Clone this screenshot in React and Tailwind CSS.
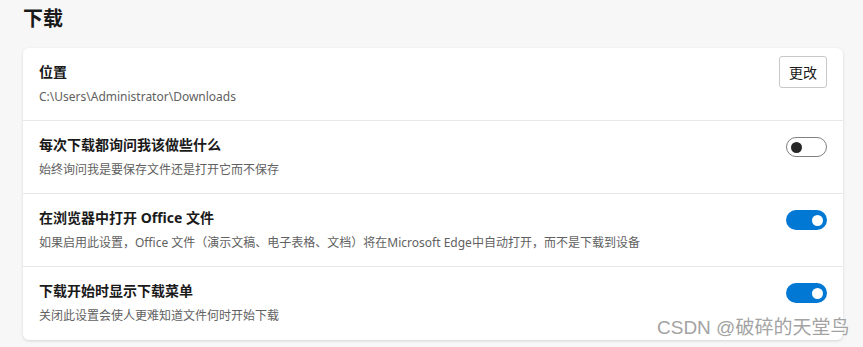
import { useState } from 'react'

const font = { fontFamily: '"Noto Sans", "Noto Sans CJK SC", sans-serif' }

const Toggle = ({ on, onChange }) => (
  <button
    onClick={onChange}
    className={`mt-[2px] w-[41px] h-[20px] rounded-full flex items-center px-[4px] shrink-0 ${
      on ? 'bg-[#0078d4] justify-end' : 'bg-white border border-[#808080] justify-start'
    }`}
  >
    <span className={`w-[11px] h-[11px] rounded-full ${on ? 'bg-white' : 'bg-[#262626]'}`} />
  </button>
)

const Row = ({ title, desc, children, last }) => (
  <div className={`h-[73px] px-4 pt-[14px] flex justify-between items-start ${last ? '' : 'border-b border-[#e8e8e8]'}`}>
    <div>
      <div className="text-[14px] leading-[20px] font-bold text-[#1a1a1a]">{title}</div>
      <div className="mt-[6px] text-[12px] leading-[18px] text-[#616161]">{desc}</div>
    </div>
    {children}
  </div>
)

export default function App() {
  const [ask, setAsk] = useState(false)
  const [office, setOffice] = useState(true)
  const [menu, setMenu] = useState(true)

  return (
    <div className="relative w-[863px] h-[347px] bg-[#f7f7f7] overflow-hidden" style={font}>
      <div className="pl-[23px] pr-[20px] pt-[5px]">
        <h1 className="text-[20px] leading-[28px] font-bold text-[#1a1a1a]">下载</h1>
        <div className="mt-[15px] bg-white rounded-[6px] shadow-[0_1px_3px_rgba(0,0,0,0.14)]">
          <Row title="位置" desc="C:\Users\Administrator\Downloads">
            <button className="-mt-[6px] w-[48px] h-[32px] border border-[#c8c8c8] rounded-[3px] text-[14px] text-[#1a1a1a] bg-white">
              更改
            </button>
          </Row>
          <Row title="每次下载都询问我该做些什么" desc="始终询问我是要保存文件还是打开它而不保存">
            <Toggle on={ask} onChange={() => setAsk(!ask)} />
          </Row>
          <Row
            title="在浏览器中打开 Office 文件"
            desc="如果启用此设置，Office 文件（演示文稿、电子表格、文档）将在Microsoft Edge中自动打开，而不是下载到设备"
          >
            <Toggle on={office} onChange={() => setOffice(!office)} />
          </Row>
          <Row title="下载开始时显示下载菜单" desc="关闭此设置会使人更难知道文件何时开始下载" last>
            <Toggle on={menu} onChange={() => setMenu(!menu)} />
          </Row>
        </div>
      </div>
      <div
        className="absolute left-[657px] top-[316px] text-[19px] leading-[24px] text-[#a3a3a3] [text-shadow:0_0_2px_#fff]"
        style={{ fontFamily: '"Liberation Sans", "Noto Sans CJK SC", sans-serif' }}
      >
        CSDN @破碎的天堂鸟
      </div>
    </div>
  )
}
